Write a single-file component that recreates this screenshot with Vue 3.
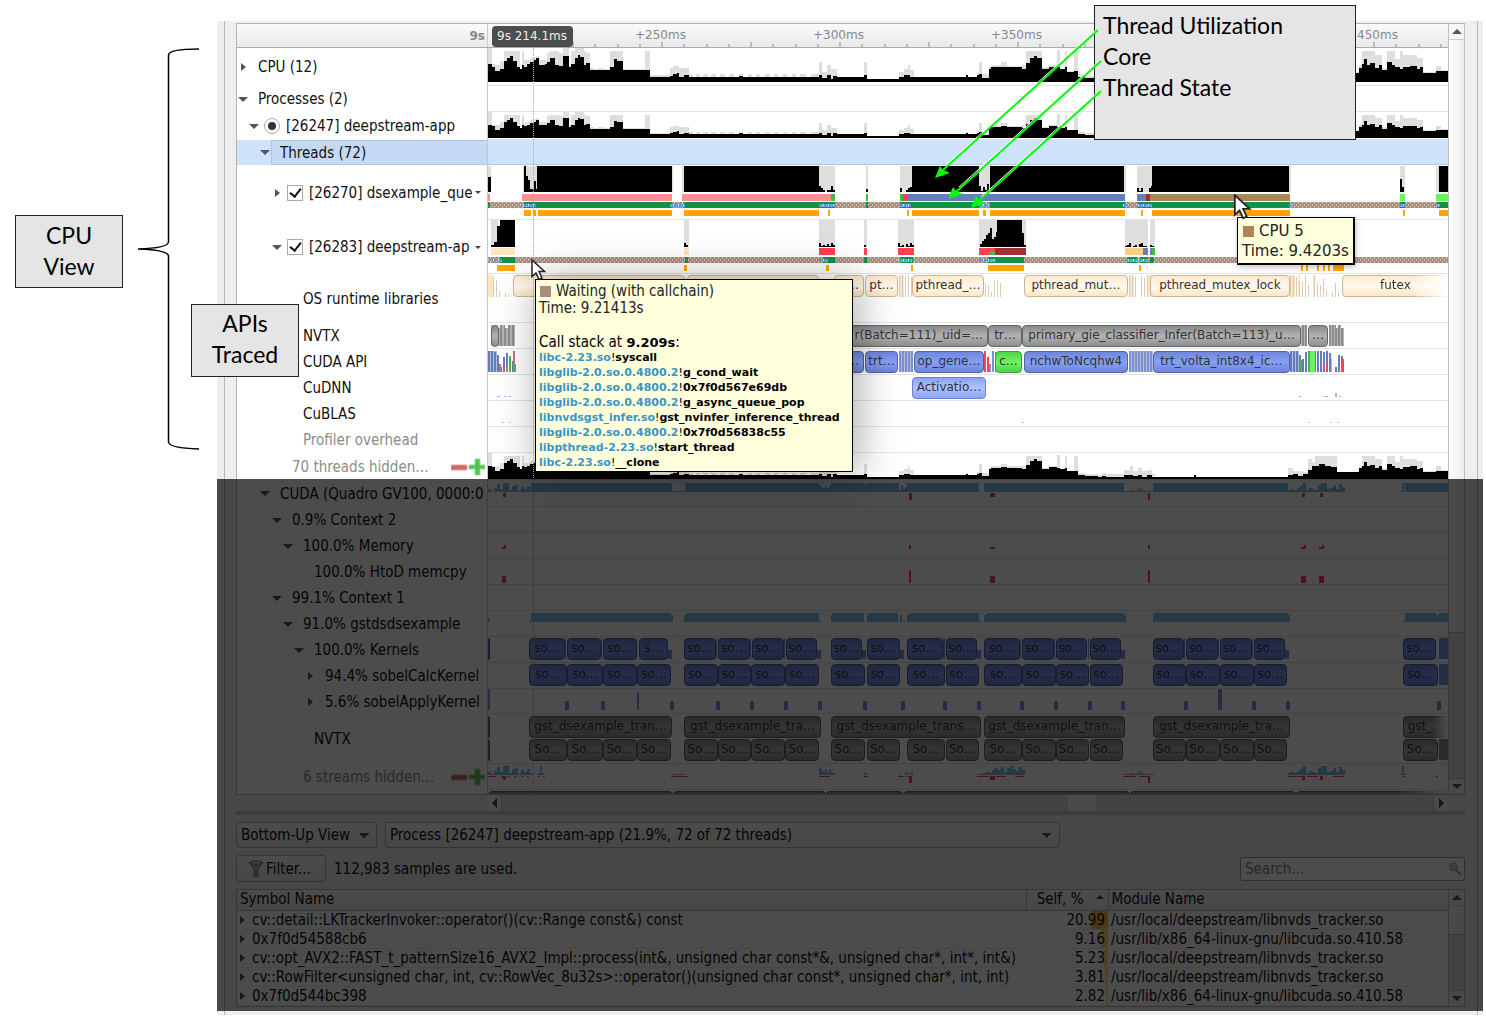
<script setup>
const SPAN = 960

const C = {
  pink: '#ff8f94', blue: '#667dbd', brown: '#aa8855', wine: '#a92b33', red: '#ff4050', leaf: '#44bb44',
  lime: '#66f55c', peach: '#ffe4bd', sand: '#ffcc80', run: '#119245', sky: '#4f9ad6', orange: '#ffa500',
  gpu: '#78bbea', kernel: '#7890e6', mem: '#ff4550', grey: '#dedede', slate: '#7d8fcf', tan: '#dccbb4',
  steel: '#8c8c8c', silver: '#b4b4b4', mist: '#b3bcdc', mint: '#9be89b', ice: '#9fb4f5'
}

/* pairs of start and end positions drawn as one band */
const band = (color, y, h, pairs) => {
  const out = []
  for (let i = 0; i < pairs.length; i += 2) out.push({ c: color, x: pairs[i], y, w: pairs[i + 1] - pairs[i], h })
  return out
}
/* a run of thin bars standing on a base line */
const bars = (color, base, x0, step, w, heights) =>
  heights.map((h, i) => ({ c: color, x: x0 + i * step, y: base - h, w, h })).filter(b => b.h)

/* start, peak height, mean height */
const load = [
  [0, 36, 19], [4, 19, 16], [7, 18, 11], [12, 22, 13], [16, 32, 22], [19, 32, 25], [22, 32, 27], [25, 32, 22], [29, 32, 16],
  [32, 13, 13], [34, 32, 18], [36, 23, 16], [39, 23, 19], [42, 25, 21], [46, 26, 23], [48, 27, 25], [51, 23, 18], [57, 23, 19],
  [59, 30, 21], [62, 32, 25], [67, 32, 18], [71, 30, 17], [75, 35, 27], [81, 18, 15], [83, 32, 19], [87, 35, 25], [90, 35, 28],
  [92, 35, 26], [96, 32, 18], [98, 30, 20], [102, 14, 12], [106, 13, 12], [110, 14, 12], [116, 13, 12], [122, 32, 15], [126, 32, 24],
  [129, 32, 22], [135, 13, 12], [149, 13, 12], [157, 32, 12], [162, 7, 5], [182, 14, 6], [185, 17, 8], [189, 17, 9], [191, 14, 5],
  [196, 14, 7], [201, 8, 5], [205, 5, 5], [208, 8, 5], [212, 5, 5], [215, 8, 5], [220, 5, 5], [223, 8, 5], [228, 5, 5], [232, 8, 5],
  [237, 5, 5], [241, 8, 5], [246, 5, 5], [251, 8, 6], [255, 5, 5], [260, 8, 5], [264, 5, 5], [268, 8, 5], [272, 5, 5], [277, 8, 5],
  [282, 5, 5], [286, 8, 5], [290, 5, 5], [295, 8, 5], [299, 5, 5], [304, 8, 5], [308, 5, 5], [312, 8, 5], [318, 5, 5], [323, 8, 5],
  [331, 21, 7], [334, 10, 4], [339, 18, 7], [343, 13, 3], [345, 13, 6], [349, 5, 5], [376, 21, 7], [379, 3, 3], [411, 10, 5],
  [416, 13, 7], [420, 18, 7], [422, 12, 5], [426, 5, 5], [478, 8, 7], [480, 5, 5], [489, 9, 7], [491, 21, 8], [494, 8, 4],
  [501, 15, 13], [503, 18, 15], [513, 21, 16], [519, 17, 15], [534, 18, 13], [538, 32, 20], [542, 32, 25], [546, 32, 27],
  [549, 32, 25], [554, 15, 13], [561, 18, 16], [569, 33, 15], [572, 13, 13], [577, 32, 15], [579, 11, 10], [586, 32, 11],
  [590, 8, 5], [597, 6, 4], [610, 5, 3], [614, 8, 4], [618, 6, 3], [636, 12, 5], [642, 18, 5], [645, 11, 4], [650, 14, 5],
  [654, 11, 3], [659, 12, 5], [664, 6, 3], [667, 3, 3], [706, 5, 5], [708, 3, 3], [800, 14, 5], [805, 11, 7], [810, 10, 4],
  [815, 9, 6], [820, 28, 12], [824, 24, 17], [827, 32, 18], [831, 32, 21], [837, 32, 17], [843, 32, 16], [849, 9, 9],
  [869, 10, 9], [871, 18, 14], [874, 32, 19], [876, 32, 24], [879, 32, 18], [882, 32, 20], [887, 28, 14], [891, 28, 18],
  [894, 14, 12], [899, 32, 21], [904, 32, 18], [907, 24, 15], [912, 32, 13], [915, 28, 16], [922, 28, 17], [929, 25, 13],
  [932, 25, 15], [935, 10, 9], [948, 17, 11], [953, 12, 11]
]
/* stepped outline of either measure, scaled to the height of its row */
const skyline = (which, base, scale) => {
  let d = `M0 ${base}`
  load.forEach((p, i) => {
    const end = i + 1 < load.length ? load[i + 1][0] : SPAN
    const y = base - Math.round(p[which] * scale)
    d += `V${y}H${end}`
  })
  return d + `V${base}Z`
}
const usage = (base, scale) => [
  { d: skyline(1, base, scale), fill: C.grey },
  { d: skyline(2, base, scale), fill: '#000' }
]

const ev = (lane) => {
  let prev = 0
  return lane.map(([from, to, text = '', tone = '']) => {
    const item = {
      text, tone,
      style: { marginLeft: ((from - prev) / SPAN) * 100 + '%', width: ((to - from) / SPAN) * 100 + '%' }
    }
    prev = to
    return item
  })
}

const gpuNoise = (base) => [
  ...bars(C.gpu, base, 0, 3, 3, [3, 1, 4, 8, 3, 9, 9, 2, 6, 7, 1, 5, 3, 6, 2]),
  ...band(C.mem, base + 1, 1, [0, 8, 13, 18, 20, 22, 26, 28, 33, 35, 39, 41, 50, 52, 55, 57]),
  ...band(C.mem, base + 1, 5, [15, 18]),
  ...band(C.gpu, base - 1, 1, [184, 196, 636, 666]),
  ...band(C.mem, base + 1, 1, [183, 200, 331, 342, 376, 380, 410, 417, 419, 424, 489, 501, 508, 518, 527, 536, 635, 648, 651, 662, 800, 814, 819, 830, 845, 856, 915, 917, 948, 950]),
  ...band(C.mem, base + 1, 8, [421, 424, 660, 662]),
  ...band(C.mem, base + 1, 5, [502, 507, 814, 817, 832, 835]),
  ...bars(C.gpu, base, 643, 3, 2, [2, 0, 3, 4, 2]),
  ...bars(C.gpu, base, 800, 3, 3, [2, 3, 2, 4, 6, 9, 2, 4, 3, 2, 7, 9, 9, 3, 4, 7, 3, 8, 5])
]
const kernelsA = [[0, 2], [41, 77, 'so…'], [79, 113, 'so…'], [115, 149, 'so…'], [151, 180, 's…'], [196, 228, 'so…'], [230, 262, 'so…'],
  [264, 296, 'so…'], [298, 329, 'so…'], [343, 374, 'so…'], [379, 412, 'so…'], [419, 455, 'so…'], [458, 489, 'so…'], [496, 532, 'so…'],
  [534, 566, 'so…'], [568, 599, 'so…'], [602, 633, 'so…'], [665, 696, 'so…'], [698, 730, 'so…'], [732, 764, 'so…'], [766, 797, 'so…'],
  [915, 948, 'so…']]
const chunks = [[41, 79], [79, 115], [115, 149], [149, 183], [196, 230], [230, 263], [263, 297], [297, 331], [343, 377], [379, 412],
  [419, 457], [458, 491], [496, 534], [534, 568], [568, 601], [602, 635], [665, 698], [698, 732], [732, 766], [766, 799], [915, 950]]

const applyAt = [77, 113, 182, 228, 262, 296, 330, 375, 413, 455, 489, 532, 566, 600, 633, 696, 764, 798, 949]

const threadBands = (core, run, edge, orange) => [
  ...core,
  { c: 'url(#weave)', x: 0, y: 38, w: SPAN, h: 6 },
  ...band(C.run, 38, 6, run),
  ...band('url(#mesh)', 40, 3, edge),
  ...band(C.orange, 46, 6, orange)
]

const rows = [
  { name: 'CPU (12)', level: 0, h: 38, arrow: 'shut', paths: usage(35, 1) },
  { name: 'Processes (2)', level: 0, h: 26, arrow: 'open' },
  { name: '[26247] deepstream-app', level: 1, h: 28, arrow: 'open', control: 'radio', paths: usage(27, 0.76) },
  { name: 'Threads (72)', level: 2, h: 25, arrow: 'open', selected: true },
  {
    name: '[26270] dsexample_que', level: 3, h: 55, arrow: 'shut', control: 'checkbox', menu: true,
    rects: [
      ...band(C.grey, 1, 27, [0, 3, 35, 49, 183, 185, 194, 197, 331, 347, 378, 380, 412, 424, 491, 502, 636, 638, 649, 665, 801, 803, 912, 917, 948, 951]),
      ...band('#000', 1, 27, [36, 38, 49, 184, 196, 331, 424, 491, 502, 636, 664, 801, 951, 960]),
      ...bars('#000', 28, 0, 3, 3, [16]),
      ...bars('#000', 28, 38, 2, 2, [17, 13, 4, 4, 12, 4]),
      ...bars('#000', 28, 331, 2, 2, [7, 5, 3, 1, 3, 3, 7, 3]),
      ...bars('#000', 28, 378, 2, 2, [4]),
      ...bars('#000', 28, 412, 2, 2, [5, 1, 1, 3, 5, 6]),
      ...bars('#000', 28, 491, 2, 2, [7, 2, 6, 3, 9]),
      ...bars('#000', 28, 649, 2, 2, [5, 2, 5, 0, 1, 1, 5, 7]),
      ...bars('#000', 28, 912, 2, 2, [14, 6, 1]),
      ...threadBands(
        [...band(C.pink, 30, 7, [0, 2, 34, 184, 194, 344]), ...band(C.leaf, 30, 7, [343, 347, 378, 380, 412, 415]),
          ...band(C.red, 30, 7, [415, 419]), ...band(C.blue, 30, 7, [419, 637, 649, 658]), ...band(C.wine, 30, 7, [658, 662]),
          ...band(C.brown, 30, 7, [662, 802]), ...band(C.lime, 30, 7, [912, 917, 948, 960])],
        [0, 2, 36, 184, 196, 347, 378, 380, 412, 491, 502, 637, 650, 802, 912, 917, 949, 960],
        [35, 48, 182, 197, 331, 347, 412, 423, 491, 502, 635, 639, 649, 664, 801, 804, 912, 917, 948, 952],
        [36, 43, 45, 48, 50, 184, 196, 331, 340, 342, 419, 421, 424, 491, 495, 498, 502, 637, 653, 655, 664, 802, 915, 917, 951, 960]
      )
    ]
  },
  {
    name: '[26283] deepstream-ap', level: 3, h: 54, arrow: 'open', control: 'checkbox', menu: true,
    rects: [
      ...band(C.grey, 0, 28, [3, 10, 196, 201, 331, 347, 376, 379, 410, 426, 491, 509, 534, 538, 637, 660, 662, 667]),
      ...band('#000', 0, 28, [12, 27, 509, 534]),
      ...bars('#000', 28, 3, 3, 3, [3, 6, 22]),
      ...bars('#000', 28, 196, 2, 2, [5, 3]),
      ...bars('#000', 28, 331, 2, 2, [5, 2, 3, 2, 4, 2, 5, 3]),
      ...bars('#000', 28, 376, 2, 2, [3]),
      ...bars('#000', 28, 410, 2, 2, [5, 2, 3, 1, 4, 2, 5, 3]),
      ...bars('#000', 28, 492, 2, 2, [4, 7, 9, 13, 15, 20, 9, 11, 16]),
      ...bars('#000', 28, 534, 2, 2, [15, 3]),
      ...bars('#000', 28, 637, 2, 2, [2, 3, 5, 1, 2, 3, 1, 4, 5, 2, 2]),
      ...bars('#000', 28, 662, 2, 2, [3, 2]),
      ...threadBands(
        [...band(C.peach, 29, 7, [3, 27, 196, 201]), ...band(C.red, 29, 7, [331, 347, 376, 379, 410, 426, 491, 507]),
          ...band(C.leaf, 32, 4, [502, 508]), ...band(C.wine, 29, 7, [507, 538]), ...band(C.sand, 29, 7, [637, 655]),
          ...band(C.blue, 29, 7, [655, 660, 662, 664]), ...band(C.leaf, 29, 7, [664, 667])],
        [12, 27, 197, 200, 335, 347, 376, 379, 412, 425, 500, 536, 639, 649, 652, 660, 662, 666],
        [3, 14, 331, 340, 410, 424, 491, 508, 637, 660],
        [9, 27, 196, 199, 338, 341, 423, 425, 500, 536, 651, 653, 813, 815, 818, 820, 829, 831, 835, 837, 840, 842, 845, 856]
      )
    ]
  },
  {
    name: 'OS runtime libraries', level: 4, h: 49, tight: true,
    rects: [
      ...band(C.peach, 1, 22, [0, 5, 411, 416, 641, 646, 660, 664, 802, 807, 810, 812, 825, 827]),
      ...bars(C.tan, 23, 5, 3, 1, [20, 17, 6, 0, 4, 2]),
      ...bars(C.tan, 23, 411, 3, 1, [22, 22, 22, 22, 20]),
      ...bars(C.tan, 23, 497, 3, 1, [14, 12, 5, 16, 17, 14]),
      ...bars(C.tan, 23, 641, 3, 1, [22, 22, 20, 0, 22, 19, 22]),
      ...bars(C.tan, 23, 802, 3, 1, [22, 22, 20, 16, 16, 22, 12, 0, 22, 14, 12, 18, 6, 0, 5, 14, 5])
    ],
    lanes: [ev([[25, 197, '', 'cream'], [199, 331, '', 'cream'], [346, 376, '…', 'cream end'], [377, 410, 'pt…', 'cream'], [424, 496, 'pthread_…', 'cream'],
      [536, 640, 'pthread_mut…', 'cream'], [662, 802, 'pthread_mutex_lock', 'cream'], [854, 960, 'futex', 'cream fade']])]
  },
  {
    name: 'NVTX', level: 4, h: 26,
    rects: [...band(C.silver, 2, 22, [3, 27, 813, 819, 841, 856]), ...bars(C.steel, 24, 12, 4, 2, [22, 22, 22, 22]), ...bars(C.steel, 24, 814, 3, 2, [22, 22]), ...bars(C.steel, 24, 841, 3, 2, [22, 22, 22, 22, 22]), ...band('#fff', 2, 3, [10, 12, 17, 20, 848, 850, 853, 856])],
    lanes: [ev([[3, 11, '', 'ash'], [346, 500, 'r(Batch=111)_uid=…', 'ash end'], [500, 534, 'tr…', 'ash'], [534, 813, 'primary_gie_classifier_Infer(Batch=113)_u…', 'ash'], [820, 840, '…', 'ash']])]
  },
  {
    name: 'CUDA API', level: 4, h: 26,
    rects: [
      ...band(C.mist, 2, 22, [0, 9, 411, 425, 641, 665, 802, 811]),
      ...bars(C.blue, 24, 0, 3, 2, [22, 22, 21, 18, 5, 16, 20, 4, 12]),
      ...bars('#d56b7b', 24, 11, 7, 2, [8, 6, 22]), ...bars(C.leaf, 24, 21, 5, 2, [17, 8]),
      ...bars(C.slate, 24, 411, 3, 2, [22, 22, 22, 22, 22]),
      ...bars(C.red, 24, 496, 3, 2, [22, 16]), ...bars(C.slate, 24, 501, 3, 2, [8, 22, 21]),
      ...bars(C.slate, 24, 641, 3, 2, [22, 22, 22, 22, 22, 22, 22, 22]),
      ...bars(C.blue, 24, 802, 3, 2, [22, 22, 22, 18, 14, 21, 22, 18, 22, 22, 22, 21, 22, 20, 0, 5, 18, 17]),
      ...bars(C.leaf, 24, 812, 8, 2, [13, 22]), ...band(C.lime, 2, 22, [822, 827]), ...bars(C.red, 24, 838, 16, 2, [9, 14]), ...bars(C.lime, 24, 843, 3, 1, [14])
    ],
    lanes: [ev([[346, 376, '…', 'azure end'], [377, 410, 'trt…', 'azure'], [426, 496, 'op_gene…', 'azure'], [507, 534, 'c…', 'green'], [536, 640, 'nchwToNcqhw4', 'azure'], [665, 802, 'trt_volta_int8x4_ic…', 'azure']])]
  },
  {
    name: 'CuDNN', level: 4, h: 26,
    rects: [...band(C.ice, 22, 1, [9, 12, 16, 18, 21, 23, 811, 813, 836, 840, 851, 853]), ...band(C.ice, 19, 4, [847, 849])],
    lanes: [ev([[424, 498, 'Activatio…', 'sky']])]
  },
  { name: 'CuBLAS', level: 4, h: 26, rects: band(C.mint, 22, 1, [14, 16, 21, 23, 534, 536, 820, 822, 842, 844, 849, 851]) },
  { name: 'Profiler overhead', level: 4, h: 26, muted: true },
  { name: '70 threads hidden…', level: 3, h: 27, muted: true, tools: true, paths: usage(27, 0.76) },
  {
    name: 'CUDA (Quadro GV100, 0000:0', level: 2, h: 27, arrow: 'open',
    rects: [...gpuNoise(12), ...band(C.gpu, 3, 9, [43, 182, 197, 331, 343, 376, 379, 411, 419, 491, 496, 636, 665, 800, 917, 960]),
      ...bars(C.gpu, 12, 182, 2, 2, [8]), ...bars(C.gpu, 12, 331, 2, 2, [7, 5, 4, 6, 4, 6]), ...bars(C.gpu, 12, 376, 3, 3, [8]), ...bars(C.gpu, 12, 411, 2, 2, [2, 7, 3, 5]), ...bars(C.gpu, 12, 912, 2, 2, [1, 9])]
  },
  { name: '0.9% Context 2', level: 3, h: 26, arrow: 'open' },
  {
    name: '100.0% Memory', level: 4, h: 26, arrow: 'open',
    rects: [...band(C.mem, 15, 2, [14, 18, 502, 507, 813, 818, 831, 836]), ...band(C.mem, 12, 5, [16, 18, 421, 423, 660, 662, 816, 818, 834, 836])]
  },
  {
    name: '100.0% HtoD memcpy', level: 5, h: 26,
    rects: [...band(C.mem, 18, 7, [14, 18, 502, 507, 813, 818, 831, 836]), ...band(C.mem, 11, 14, [421, 423, 660, 662])]
  },
  { name: '99.1% Context 1', level: 3, h: 26, arrow: 'open' },
  {
    name: '91.0% gstdsdsexample', level: 4, h: 26, arrow: 'open',
    rects: [...band(C.gpu, 2, 9, [43, 183, 198, 331, 344, 376, 380, 410, 421, 491, 498, 636, 666, 800, 917, 948, 951, 960]),
      ...band(C.gpu, 4, 7, [183, 185, 196, 198, 343, 344, 379, 380, 419, 421, 412, 414, 496, 498, 636, 638, 665, 666, 800, 802, 948, 951]), ...band(C.gpu, 10, 1, [41, 43, 331, 333, 414, 417, 491, 493, 915, 917]), ...band(C.gpu, 7, 4, [0, 2])]
  },
  {
    name: '100.0% Kernels', level: 5, h: 26, arrow: 'open', tight: true,
    rects: [...band(C.kernel, 14, 9, [180, 184, 329, 333, 374, 378, 412, 416, 489, 493, 633, 637, 797, 801]), ...band(C.kernel, 1, 22, [77, 78, 113, 114, 228, 229, 262, 263, 296, 297, 455, 457, 532, 533, 566, 567, 600, 601, 696, 697, 730, 731, 764, 765, 951, 960])],
    lanes: [ev(kernelsA.map(k => [k[0], k[1], k[2], 'kernel']))]
  },
  {
    name: '94.4% sobelCalcKernel', level: 6, h: 26, arrow: 'shut', tight: true,
    rects: band(C.kernel, 1, 22, [951, 960]),
    lanes: [ev(chunks.map(k => [k[0], k[1], 'so…', 'kernel']))]
  },
  {
    name: '5.6% sobelApplyKernel', level: 6, h: 25, arrow: 'shut',
    rects: [...band(C.kernel, 12, 10, applyAt.flatMap(x => [x, x + 4])), ...band(C.kernel, 3, 19, [149, 151]), ...band(C.kernel, 0, 22, [0, 2, 730, 734])]
  },
  {
    name: 'NVTX', level: 5, h: 50,
    rects: band(C.steel, 25, 22, [951, 960]),
    lanes: [
      ev([[0, 2, '', 'ash'], [41, 184, 'gst_dsexample_tran…', 'ash'], [196, 333, 'gst_dsexample_tra…', 'ash'], [343, 493, 'gst_dsexample_trans…', 'ash'],
        [496, 637, 'gst_dsexample_tran…', 'ash'], [665, 802, 'gst_dsexample_tra…', 'ash'], [915, 960, 'gst_…', 'ash fade']]),
      ev([[0, 2, '', 'ash'], ...chunks.map(k => [k[0], k[1], 'So…', 'ash'])])
    ]
  },
  {
    name: '6 streams hidden…', level: 4, h: 26, muted: true, tools: true,
    rects: [...gpuNoise(11), ...bars(C.gpu, 11, 50, 2, 2, [2, 9, 2]), ...bars(C.gpu, 11, 331, 2, 2, [7, 5, 3, 5, 2, 6, 3, 2]), ...bars(C.gpu, 11, 376, 2, 2, [3, 1]), ...bars(C.gpu, 11, 411, 3, 2, [1, 0, 3, 2, 3]),
      ...bars(C.gpu, 11, 489, 3, 3, [1, 1, 2, 3, 2, 5, 7, 5, 8, 3, 7, 9, 6, 4, 8, 5]), ...bars(C.gpu, 11, 912, 2, 2, [1, 9, 1])]
  },
  {
    name: '', level: 0, h: 4, tight: true,
    lanes: [ev([[0, 185, '', 'ash'], [185, 338, '', 'ash'], [338, 415, '', 'ash'], [415, 642, '', 'ash'], [642, 808, '', 'ash'], [808, 960, '', 'ash fade']])]
  }
]

const marks = ['+250ms', '+300ms', '+350ms', '', '+450ms']
const ticks = Array.from({ length: 43 }, (_, i) => {
  const k = i - 7
  const rank = ((k % 8) + 8) % 8
  return { x: Math.round(173 + k * 22.25), h: rank % 4 === 0 ? 5 : 3 }
}).filter(t => t.x > 80 && t.x < SPAN)

const stack = [
  ['libc-2.23.so', 'syscall'],
  ['libglib-2.0.so.0.4800.2', 'g_cond_wait'],
  ['libglib-2.0.so.0.4800.2', '0x7f0d567e69db'],
  ['libglib-2.0.so.0.4800.2', 'g_async_queue_pop'],
  ['libnvdsgst_infer.so', 'gst_nvinfer_inference_thread'],
  ['libglib-2.0.so.0.4800.2', '0x7f0d56838c55'],
  ['libpthread-2.23.so', 'start_thread'],
  ['libc-2.23.so', '__clone']
]

const symbols = [
  ['cv::detail::LKTrackerInvoker::operator()(cv::Range const&) const', '20.99', '/usr/local/deepstream/libnvds_tracker.so'],
  ['0x7f0d54588cb6', '9.16', '/usr/lib/x86_64-linux-gnu/libcuda.so.410.58'],
  ['cv::opt_AVX2::FAST_t_patternSize16_AVX2_Impl::process(int&, unsigned char const*&, unsigned char*, int*, int&)', '5.23', '/usr/local/deepstream/libnvds_tracker.so'],
  ['cv::RowFilter<unsigned char, int, cv::RowVec_8u32s>::operator()(unsigned char const*, unsigned char*, int, int)', '3.81', '/usr/local/deepstream/libnvds_tracker.so'],
  ['0x7f0d544bc398', '2.82', '/usr/lib/x86_64-linux-gnu/libcuda.so.410.58']
]
</script>

<template>
  <main class="page">
    <svg class="defs" aria-hidden="true">
      <defs>
        <pattern id="weave" width="4" height="4" patternUnits="userSpaceOnUse">
          <rect width="4" height="4" fill="#a88c7c" />
          <rect x="0" y="0" width="1" height="1" fill="#fff" />
          <rect x="2" y="2" width="1" height="1" fill="#fff" />
        </pattern>
        <pattern id="mesh" width="5" height="4" patternUnits="userSpaceOnUse">
          <rect width="5" height="4" fill="#4f9ad6" />
          <rect width="1" height="2" fill="#e4eef5" />
          <rect x="3" y="2" width="1" height="2" fill="#e4eef5" />
        </pattern>
      </defs>
    </svg>

    <div class="window">
      <div class="frame">
        <section class="viewer">
          <div class="timeline">
            <header class="ruler">
              <div class="origin">9s</div>
              <div class="scale">
                <svg class="plot" :viewBox="`0 0 ${SPAN} 23`" preserveAspectRatio="none" aria-hidden="true">
                  <rect v-for="t in ticks" :key="t.x" :x="t.x" :y="23 - t.h" width="2" :height="t.h" fill="#bbb" />
                </svg>
                <div class="marks"><span v-for="(m, i) in marks" :key="i">{{ m }}</span></div>
                <output class="now">9s 214.1ms</output>
              </div>
            </header>
            <div class="rows">
              <div v-for="(row, i) in rows" :key="i" class="row" :class="{ selected: row.selected }" :style="{ height: row.h + 'px' }">
                <div class="label" :class="['level' + row.level, { muted: row.muted }]">
                  <span class="twist" :class="row.arrow"></span>
                  <template v-if="row.control">
                    <input :id="'pick' + i" :type="row.control" class="pick" checked>
                    <label :for="'pick' + i" class="name wide">{{ row.name }}</label>
                  </template>
                  <span v-else class="name" :class="{ chosen: row.selected }">{{ row.name }}</span>
                  <span v-if="row.menu" class="menu"></span>
                  <svg v-if="row.tools" class="tools" width="34" height="18" viewBox="0 0 34 18" aria-hidden="true">
                    <rect x="0" y="7" width="16" height="5" rx="1" fill="#d06868" stroke="#e0a0a0" />
                    <path d="M24 1h5v6h5v4h-5v6h-5v-6h-6V7h6z" fill="#55c455" stroke="#8fdc8f" />
                  </svg>
                </div>
                <div class="chart">
                  <svg v-if="row.rects || row.paths" class="plot" :viewBox="`0 0 ${SPAN} ${row.h}`" preserveAspectRatio="none" aria-hidden="true">
                    <path v-for="(p, k) in row.paths" :key="'p' + k" :d="p.d" :fill="p.fill" />
                    <rect v-for="(r, k) in row.rects" :key="k" :x="r.x" :y="r.y" :width="r.w" :height="r.h" :fill="r.c" />
                  </svg>
                  <div v-if="row.lanes" class="lanes" :class="{ tight: row.tight }">
                    <div v-for="(lane, n) in row.lanes" :key="n" class="lane">
                      <div v-for="(e, k) in lane" :key="k" class="event" :class="e.tone" :style="e.style">{{ e.text }}</div>
                    </div>
                  </div>
                </div>
              </div>
            </div>
            <div class="guide"><span></span></div>
          </div>
          <div class="vbar">
            <i class="btn up"></i>
            <i class="thumb"></i>
            <i class="track"></i>
            <i class="btn down"></i>
          </div>
        </section>

        <div class="hbar">
          <i class="btn left"></i>
          <i class="before"></i>
          <i class="grip"></i>
          <i class="after"></i>
          <i class="btn right"></i>
        </div>
        <div class="splitter"></div>

        <div class="bar">
          <select class="combo view" aria-label="View"><option>Bottom-Up View</option></select>
          <select class="combo scope" aria-label="Scope"><option>Process [26247] deepstream-app (21.9%, 72 of 72 threads)</option></select>
        </div>
        <div class="bar">
          <button type="button" class="filter">
            <svg width="16" height="18" viewBox="0 0 16 18" aria-hidden="true">
              <path d="M1 2.500Q8-.5 15 2.500L10 9v7q-2 2-4 0V9z" fill="#a8adb5" stroke="#70757d" />
              <ellipse cx="8" cy="2.500" rx="6" ry="1.500" fill="#d8dbe0" stroke="#80858d" />
            </svg>
            Filter...
          </button>
          <span class="used">112,983 samples are used.</span>
          <span class="search">
            <input type="search" placeholder="Search..." aria-label="Search">
            <svg width="14" height="14" viewBox="0 0 14 14" aria-hidden="true">
              <path d="M8 8l4.500 4.500" stroke="#999" stroke-width="2" stroke-linecap="round" />
              <circle cx="5.500" cy="5" r="4" fill="#c9d6e4" stroke="#a3adb8" />
            </svg>
          </span>
        </div>

        <section class="results">
          <table>
            <colgroup><col><col class="self"><col class="module"></colgroup>
            <thead>
              <tr><th>Symbol Name</th><th class="sorted"><span>Self, %</span><i class="asc"></i></th><th>Module Name</th></tr>
            </thead>
            <tbody>
              <tr v-for="s in symbols" :key="s[0]">
                <td><span class="cell"><i class="twist shut"></i>{{ s[0] }}</span></td>
                <td class="num" :class="{ hot: s[1] > 20 }"><span class="heat" :style="{ width: s[1] + '%' }"></span>{{ s[1] }}</td>
                <td class="mod">{{ s[2] }}</td>
              </tr>
            </tbody>
          </table>
          <div class="vbar">
            <i class="btn up"></i>
            <i class="thumb small"></i>
            <i class="track"></i>
            <i class="btn down"></i>
          </div>
        </section>
      </div>

      <div class="tip callstack">
        <p><i class="swatch waiting"></i>Waiting (with callchain)</p>
        <p>Time: 9.21413s</p>
        <p class="lead">Call stack at <b>9.209s</b>:</p>
        <ul>
          <li v-for="(f, i) in stack" :key="i"><span>{{ f[0] }}</span><em>!</em>{{ f[1] }}</li>
        </ul>
      </div>
      <div class="tip core">
        <p><i class="swatch cpu"></i>CPU 5</p>
        <p>Time: 9.4203s</p>
      </div>
      <svg class="pointer one" width="15" height="22" viewBox="0 0 15 22" aria-hidden="true">
        <path d="M1 1v16.500l4-3.500 3 6.500 3-1.500-3-6.500h5.500z" fill="#fff" stroke="#222" stroke-width="1.500" />
      </svg>
      <svg class="pointer two" width="19" height="26" viewBox="0 0 15 22" aria-hidden="true">
        <path d="M1 1v16.500l4-3.500 3 6.500 3-1.500-3-6.500h5.500z" fill="#fff" stroke="#222" stroke-width="1.500" />
      </svg>
      <div class="shade"></div>
    </div>

    <svg class="brace" width="64" height="402" viewBox="0 0 64 402" fill="none" stroke="#000" stroke-width="1.500" aria-hidden="true">
      <path d="M62 1Q32 1 31.500 7V194Q31 200 1 201Q31 202 31.500 208V394Q32 400 62 401" />
    </svg>
    <aside class="note cpu-view">CPU<br>View</aside>
    <aside class="note apis">APIs<br>Traced</aside>
    <aside class="note legend">Thread Utilization<br>Core<br>Thread State</aside>
    <svg class="arrows" width="170" height="184" viewBox="0 0 170 184" fill="none" aria-hidden="true">
      <g stroke="#fff"><path d="M161 2L10 138M164 33L24 159M165 62L46 169" /></g>
      <g stroke="#0f0" stroke-width="2"><path d="M163 2L8 142M166 33L21 164M166 63L44 173" /></g>
      <g fill="#0f0"><path d="M0 150L5 138 8 142 15 145zM13 171L18 159 21 163 28 166zM36 180L41 168 44 172 51 175z" /></g>
    </svg>
  </main>
</template>

<style>
body { background: #fff; }
</style>

<style scoped>
* { box-sizing: border-box; }
.page {
  position: relative;
  padding: 21px 3px 4px 217px;
  font: 15px/18px "DejaVu Sans Condensed", "DejaVu Sans", sans-serif;
  color: #111;
}
.defs { position: absolute; width: 0; height: 0; }
.window { position: relative; background: #eee; padding: 0 5px 0 7px; }
.frame { border: solid #b5b5b5; border-width: 0 1px; padding: 2px 12px 8px 11px; }

.viewer { display: flex; border: 1px solid #b4b4b4; border-right: 0; background: #fff; }
.timeline { position: relative; flex: 1; min-width: 0; }
.ruler {
  display: flex; height: 24px; border-bottom: 1px solid #aaa;
  background: linear-gradient(#fbfbfb, #e9e9e9);
  color: #888; font: 12px/23px "DejaVu Sans", sans-serif;
}
.origin { width: 251px; padding-right: 2px; text-align: right; font-weight: bold; border-right: 1px solid #ccc; line-height: 25px; }
.scale { position: relative; flex: 1; display: grid; min-width: 0; }
.plot { grid-area: 1 / 1; width: 100%; height: 100%; shape-rendering: crispEdges; display: block; }
.marks { grid-area: 1 / 1; display: grid; grid-template-columns: repeat(5, 1fr); margin-left: 8.7%; margin-right: -1.4%; text-align: center; line-height: 22px; overflow: hidden; }
.now { position: absolute; left: 4px; top: 2px; height: 21px; padding: 0 6px 0 5px; line-height: 21px; border-radius: 4px; background: #4d4d4d; color: #eee; }

.row { display: flex; overflow: hidden; }
.label { display: flex; align-items: center; width: 251px; flex: none; border-right: 1px solid #c8c8c8; padding-right: 3px; white-space: nowrap; overflow: hidden; }
.level0 { padding-left: 1px; } .level1 { padding-left: 12px; } .level2 { padding-left: 23px; } .level3 { padding-left: 35px; }
.level4 { padding-left: 46px; } .level5 { padding-left: 57px; } .level6 { padding-left: 68px; }
.muted { color: #8c8c8c; }
.twist { flex: none; width: 10px; height: 10px; display: grid; place-items: center; }
.twist::before { content: ""; border: 0 solid transparent; }
.twist.open::before { border-width: 5px 5px 0; border-top-color: #555; }
.twist.shut::before { border-width: 4px 0 4px 5px; border-left-color: #555; }
.name { margin-left: 10px; flex: 1; min-width: 0; line-height: 20px; }
.name.wide { margin-left: 6px; }
.name.chosen { margin: 0 -4px 0 1px; padding-left: 8px; height: 25px; line-height: 24px; border: 1px solid #b2c6e4; border-right: 0; background: #c6d9f4; }
.selected { background: #cee2fc; }
.selected .chart { border-bottom-color: #b4c8e4; }
.pick { appearance: none; width: 16px; height: 16px; margin: 0 0 0 5px; flex: none; border: 1px solid #aaa; background: #fff; display: grid; place-items: center; }
.pick::before { content: ""; }
.pick[type=radio] { border-radius: 50%; }
.pick[type=radio]::before { width: 8px; height: 8px; border-radius: 50%; background: #333; }
.pick[type=checkbox]::before { width: 5px; height: 9px; border: solid #111; border-width: 0 2px 2px 0; transform: rotate(38deg); margin-top: -3px; }
.menu { margin: 0 3px 0 6px; border: 3px solid transparent; border-top-color: #444; border-bottom: 0; }
.tools { flex: none; margin-right: -1px; }
.chart { flex: 1; min-width: 0; display: grid; border-bottom: 1px solid #e4e4e4; }
.lanes { grid-area: 1 / 1; padding-top: 2px; display: flex; flex-direction: column; gap: 1px; min-width: 0; }
.lanes.tight { padding-top: 1px; }
.lane { display: flex; }
.event {
  flex: none; height: 22px; border: 1px solid; border-radius: 4px; overflow: hidden; white-space: nowrap;
  text-align: center; font: 12px/19px "DejaVu Sans", sans-serif; color: #333; min-width: 0;
}
.cream { border-color: #cbb593; background: linear-gradient(#ffe9cb, #fff8ee 50%, #ffe6c2); }
.ash { border-color: #666; background: linear-gradient(#8a8a8a, #b2b2b2 50%, #8e8e8e); }
.azure { border-color: #52639f; background: linear-gradient(#6d86db, #86a0f6 50%, #6d86db); }
.sky { border-color: #6a82cc; background: linear-gradient(#8ba4fa, #afc1ff 50%, #8ba4fa); }
.green { border-color: #3f9a3a; background: linear-gradient(#4bd548, #6cf562 50%, #4bd548); }
.kernel { border-color: #4d60a4; background: linear-gradient(#6a80d4, #8299f6 50%, #6a80d4); }
.end { text-align: right; padding-right: 4px; }
.fade { border-right: 0; border-radius: 4px 0 0 4px; mask-image: linear-gradient(to right, #000 65%, transparent); }
.guide { position: absolute; top: 24px; bottom: 0; left: 251px; right: 0; padding-left: calc(5% - 16px); pointer-events: none; }
.guide span { display: block; height: 100%; border-left: 1px dotted #aaa; }

.vbar { display: flex; flex-direction: column; width: 17px; flex: none; border: solid #c0c0c0; border-width: 0 1px; background: #f8f8f8; }
.btn { display: grid; place-items: center; flex: none; height: 16px; background: #f6f6f6; }
.btn::before { content: ""; border: 0 solid transparent; }
.up { border-bottom: 1px solid #ccc; }
.up::before { border-width: 0 5px 5px; border-bottom-color: #555; }
.down { border-top: 1px solid #ccc; }
.down::before { border-width: 5px 5px 0; border-top-color: #555; }
.thumb { flex: 594; background: linear-gradient(to right, #fdfdfd, #eee); border-bottom: 1px solid #bbb; }
.thumb.small { flex: 30; }
.track { flex: 145; background: #ddd; }
.small + .track { flex: 58; }
.hbar { display: flex; height: 16px; margin: 0 17px 0 251px; background: #e2e2e2; }
.hbar .btn { width: 15px; height: 16px; }
.left { border-right: 1px solid #ccc; }
.left::before { border-width: 5px 5px 5px 0; border-right-color: #444; }
.right { border-left: 1px solid #ccc; }
.right::before { border-width: 5px 0 5px 5px; border-left-color: #444; }
.before { flex: 565; } .after { flex: 336; }
.grip { flex: 30; background: #f4f4f4; border: solid #ccc; border-width: 0 1px; }
.splitter { height: 4px; background: #c9c9c9; }

.bar { display: flex; align-items: center; gap: 8px; margin-top: 7px; }
.combo {
  appearance: none; height: 26px; padding: 0 24px 0 4px; border: 1px solid #b0b0b0; border-radius: 3px; font: inherit; color: #111;
  background: linear-gradient(45deg, transparent 50%, #555 50%) calc(100% - 12px) 10px / 5px 5px no-repeat,
    linear-gradient(-45deg, transparent 50%, #555 50%) calc(100% - 7px) 10px / 5px 5px no-repeat,
    linear-gradient(#fdfdfd, #ebebeb);
}
.view { width: 141px; }
.scope { flex: 0 1 675px; }
.filter { display: flex; align-items: center; gap: 2px; height: 27px; width: 90px; padding: 0 0 0 11px; border: 1px solid #b0b0b0; border-radius: 3px; background: linear-gradient(#fdfdfd, #ebebeb); font: inherit; color: #111; white-space: nowrap; }
.search { display: flex; align-items: center; width: 225px; height: 24px; margin-left: auto; padding: 0 2px 0 4px; border: 1px solid #999; border-radius: 3px; background: #fff; }
.search input { flex: 1; min-width: 0; border: 0; padding: 0; background: none; font: inherit; }
.search input::placeholder { color: #888; }

.results { display: flex; margin-top: 7px; border: 1px solid #b4b4b4; border-right: 0; background: #fff; }
table { flex: 1; table-layout: fixed; border-collapse: collapse; min-width: 0; width: 100%; }
.self { width: 82px; } .module { width: 340px; }
th { height: 20px; padding: 0 3px; text-align: left; font-weight: normal; background: linear-gradient(#fcfcfc, #ebebeb); border: solid #bbb; border-width: 0 1px 1px 0; line-height: 19px; }
th:last-child { border-right: 0; }
th.sorted { text-align: right; padding-right: 4px; }
.asc { display: inline-block; border: 4px solid transparent; border-top: 0; border-bottom-color: #444; margin: 0 0 5px 12px; }
td { height: 19px; padding: 0; line-height: 18px; border-bottom: 1px solid #eee; white-space: nowrap; overflow: hidden; }
.mod { padding-left: 3px; }
.cell { display: flex; align-items: center; gap: 5px; }
.num { position: relative; text-align: right; padding-right: 3px; z-index: 0; }
.heat { position: absolute; right: 0; top: 0; bottom: 0; z-index: -1; background: #ffe27a; }
.hot .heat { background: #ffb84f; }

.tip { position: absolute; background: #ffffdc; color: #222; border: 1px solid #000; }
.tip p { margin: 0; line-height: 17px; white-space: nowrap; }
.swatch { display: inline-block; width: 11px; height: 11px; margin: 0 5px 0 1px; vertical-align: -1px; }
.waiting { background: #a88c7c; } .cpu { background: #aa8855; }
.callstack { left: 318px; top: 258px; width: 318px; padding: 3px 3px 1px; box-shadow: 4px 2px 40px rgba(0, 0, 0, .35); }
.callstack .lead { margin-top: 17px; color: #000; }
.callstack b { font-family: "DejaVu Sans", sans-serif; font-size: 13px; }
.callstack ul { list-style: none; margin: -1px 0 0; padding: 0; font: bold 11px/15px "DejaVu Sans", sans-serif; color: #000; white-space: nowrap; }
.callstack li span { color: #3b94c6; }
.callstack em { font-style: normal; font-weight: normal; }
.core { left: 1020px; top: 196px; padding: 3px 4px 2px; border-width: 1px 2px 2px 1px; font: 15px/20px "DejaVu Sans", sans-serif; box-shadow: 1px 2px 6px rgba(0, 0, 0, .25); }
.core p { line-height: 20px; }
.pointer { position: absolute; }
.one { left: 314px; top: 238px; }
.two { left: 1016px; top: 173px; }
.shade { position: absolute; left: 0; right: 0; top: 458px; bottom: 4px; background: rgba(0, 0, 0, .7); pointer-events: none; }

.note { position: absolute; border: 1px solid #222; background: #e5e5e5; color: #000; font: 23px/31px Lato, Carlito, sans-serif; text-align: center; white-space: nowrap; }
.cpu-view { left: 15px; top: 215px; width: 108px; height: 73px; padding-top: 4px; }
.apis { left: 191px; top: 304px; width: 108px; height: 73px; padding-top: 3px; }
.legend { left: 1094px; top: 5px; width: 262px; height: 135px; padding: 4px 8px; text-align: left; }
.brace { position: absolute; left: 137px; top: 48px; }
.arrows { position: absolute; left: 935px; top: 28px; }
</style>
